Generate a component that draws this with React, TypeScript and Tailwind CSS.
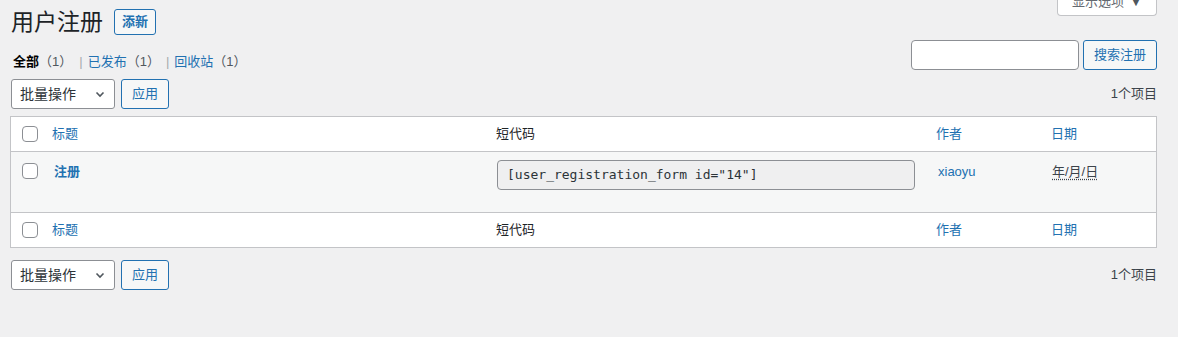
import React from "react";

const font = { fontFamily: '"Liberation Sans", "Noto Sans CJK SC", sans-serif' };

function Check() {
  return <div className="w-4 h-4 border border-[#8c8f94] rounded-[4px] bg-white" />;
}

function BulkBar() {
  return (
    <div className="flex items-center justify-between h-[30px]">
      <div className="flex items-center gap-[6px] pl-[1px]">
        <div className="w-[104px] h-[30px] border border-[#8c8f94] rounded-[3px] bg-white flex items-center justify-between pl-[8px] pr-[8px] text-[14px] text-[#2c3338]">
          <span>批量操作</span>
          <svg width="12" height="12" viewBox="0 0 12 12" fill="none">
            <path d="M2.5 4.5 L6 8 L9.5 4.5" stroke="#50575e" strokeWidth="1.6" />
          </svg>
        </div>
        <div className="w-[48px] h-[30px] border border-[#2271b1] rounded-[3px] bg-[#f6f7f7] flex items-center justify-center text-[13px] text-[#2271b1]">
          应用
        </div>
      </div>
      <div className="text-[13px] text-[#3c434a]">1个项目</div>
    </div>
  );
}

const cols = "grid grid-cols-[33px_444px_440px_115px_1fr]";

function HeadRow({ bottom }: { bottom?: boolean }) {
  return (
    <div className={`${cols} h-[35px] items-center bg-white text-[13px] ${bottom ? "border-t border-[#c3c4c7]" : "border-b border-[#c3c4c7]"}`}>
      <div className="pl-[11px]"><Check /></div>
      <div className="pl-[8px] text-[#2271b1]">标题</div>
      <div className="pl-[8px] text-[#1d2327]">短代码</div>
      <div className="pl-[8px] text-[#2271b1]">作者</div>
      <div className="pl-[8px] text-[#2271b1]">日期</div>
    </div>
  );
}

export default function App() {
  return (
    <div className="w-[1178px] h-[337px] bg-[#f0f0f1] overflow-hidden pl-[10px] pr-[21px]" style={font}>
      <div className="flex justify-between">
        <div className="flex items-center gap-[11px] pt-[9px] pl-[1px] h-[35px]">
          <h1 className="text-[23px] font-normal text-[#1d2327] leading-[26px]">用户注册</h1>
          <div className="h-[26px] px-[7px] border border-[#2271b1] rounded-[3px] bg-[#f6f7f7] text-[#2271b1] text-[13px] font-semibold flex items-center">
            添新
          </div>
        </div>
        <div className="-mt-[12px] h-[28px] w-[100px] border border-[#c3c4c7] border-t-0 rounded-b-[4px] bg-white flex items-center justify-center gap-[6px] text-[13px] text-[#646970]">
          <span>显示选项</span>
          <span className="text-[12px] text-[#50575e]">▼</span>
        </div>
      </div>

      <div className="flex justify-between mt-[5px] h-[30px]">
        <div className="flex items-end text-[13px] leading-[18px] pl-[3px] -mb-[1px]">
          <span className="font-semibold text-black">全部</span>
          <span className="text-[#50575e]">（1）</span>
          <span className="text-[#a7aaad] pl-[7px] pr-[5px]">|</span>
          <span className="text-[#2271b1]">已发布</span>
          <span className="text-[#50575e]">（1）</span>
          <span className="text-[#a7aaad] pl-[6px] pr-[5px]">|</span>
          <span className="text-[#2271b1]">回收站</span>
          <span className="text-[#50575e]">（1）</span>
        </div>
        <div className="flex gap-[4px]">
          <div className="w-[168px] h-[30px] border border-[#8c8f94] rounded-[4px] bg-white" />
          <div className="w-[74px] h-[30px] border border-[#2271b1] rounded-[3px] bg-[#f6f7f7] text-[#2271b1] text-[13px] flex items-center justify-center">
            搜索注册
          </div>
        </div>
      </div>

      <div className="mt-[9px]">
        <BulkBar />
      </div>

      <div className="mt-[7px] border border-[#c3c4c7] bg-white">
        <HeadRow />
        <div className={`${cols} h-[60px] bg-[#f6f7f7] text-[13px]`}>
          <div className="pl-[11px] pt-[11px]"><Check /></div>
          <div className="pl-[10px] pt-[10px] font-semibold text-[#2271b1]">注册</div>
          <div className="pl-[9px] pt-[8px]">
            <div className="w-[418px] h-[30px] border border-[#8c8f94] rounded-[4px] bg-[#efeff0] flex items-center pl-[9px] text-[13px] text-[#2c3338]" style={{ fontFamily: '"DejaVu Sans Mono", "Liberation Mono", monospace' }}>
              [user_registration_form id="14"]
            </div>
          </div>
          <div className="pl-[10px] pt-[10px] text-[#2271b1]">xiaoyu</div>
          <div className="pl-[9px] pt-[10px] text-[#3c434a]">
            <span className="underline decoration-dotted underline-offset-[3px]">年/月/日</span>
          </div>
        </div>
        <HeadRow bottom />
      </div>

      <div className="mt-[12px]">
        <BulkBar />
      </div>
    </div>
  );
}
